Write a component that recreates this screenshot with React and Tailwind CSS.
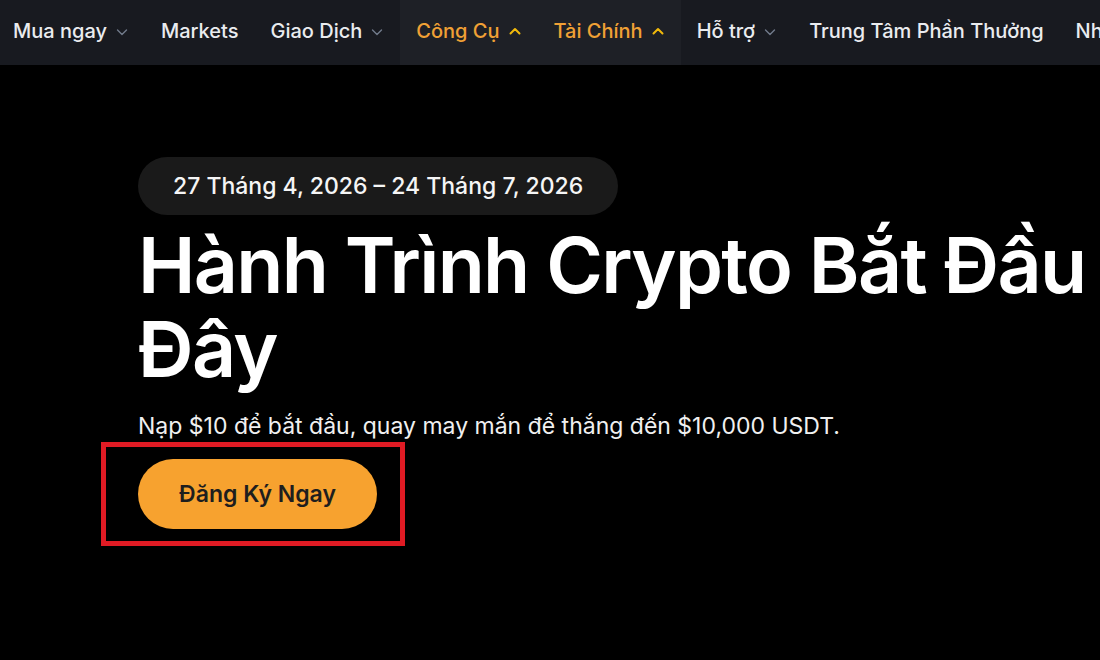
import React from "react";

const Down = () => (
  <svg width="14" height="14" viewBox="0 0 14 14" fill="none" className="ml-2 mt-[2px]">
    <path d="M2.5 5l4.5 4.5L11.5 5" stroke="#707a8a" strokeWidth="1.4" strokeLinecap="round" strokeLinejoin="round" />
  </svg>
);

const Up = () => (
  <svg width="14" height="14" viewBox="0 0 14 14" fill="none" className="ml-2">
    <path d="M2.5 9.5L7 5l4.5 4.5" stroke="#f0b90b" strokeWidth="2" strokeLinecap="round" strokeLinejoin="round" />
  </svg>
);

const items = [
  { label: "Mua ngay", caret: "down" },
  { label: "Markets" },
  { label: "Giao Dịch", caret: "down" },
  { label: "Công Cụ", caret: "up", active: true },
  { label: "Tài Chính", caret: "up", active: true },
  { label: "Hỗ trợ", caret: "down" },
  { label: "Trung Tâm Phần Thưởng" },
  { label: "Nhiều hơn" },
];

export default function App() {
  return (
    <div
      className="w-[1100px] h-[660px] overflow-hidden bg-black text-white"
      style={{ fontFamily: "Inter, 'Noto Sans', sans-serif" }}
    >
      <nav className="h-[65px] bg-[#181a20] flex items-stretch -ml-[3px] whitespace-nowrap">
        {items.map((it) => (
          <div
            key={it.label}
            className={
              "flex items-center px-4 pb-[4px] text-[20px] font-medium " +
              (it.active ? "bg-[#1e2026] text-[#f0a035]" : "text-[#eaecef]")
            }
          >
            <span>{it.label}</span>
            {it.caret === "down" && <Down />}
            {it.caret === "up" && <Up />}
          </div>
        ))}
      </nav>

      <main className="pl-[138px] pt-[92px]">
        <div className="inline-flex items-center h-[58px] px-[35px] rounded-full bg-[#1a1a1a] text-[23px] font-medium text-[#f5f5f5]">
          27 Tháng 4, 2026 – 24 Tháng 7, 2026
        </div>

        <h1 className="mt-[8px] text-[77px] leading-[84px] font-semibold tracking-[-1.7px] text-white whitespace-nowrap">
          Hành Trình Crypto Bắt Đầu
          <br />
          Đây
        </h1>

        <p className="mt-[20px] text-[23px] leading-[30px] text-[#f0f0f0]">
          Nạp $10 để bắt đầu, quay may mắn để thắng đến $10,000 USDT.
        </p>

        <div className="-ml-[37px] mt-[1px] w-[304px] h-[104px] border-[5px] border-[#e01b24] flex items-center pl-[32px]">
          <button className="h-[70px] w-[239px] rounded-full bg-[#f7a22f] text-[23px] font-semibold text-[#1e1e1e]">
            Đăng Ký Ngay
          </button>
        </div>
      </main>
    </div>
  );
}
